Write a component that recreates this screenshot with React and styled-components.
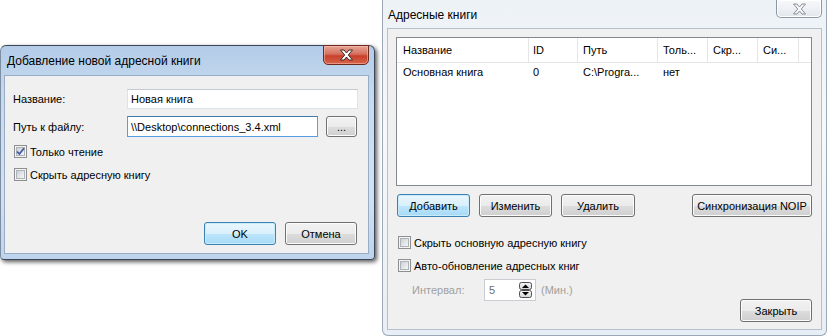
import styled, { createGlobalStyle } from "styled-components";

const GlobalStyle = createGlobalStyle`
  html, body { margin: 0; padding: 0; background: #fff; }
  body {
    font-family: "Liberation Sans", Arial, sans-serif;
    font-size: 11px;
    color: #000;
  }
  * { box-sizing: border-box; }
`;

const Stage = styled.div`
  width: 832px;
  height: 336px;
  overflow: hidden;
  background: #fff;
  display: flex;
  align-items: flex-start;
`;

/* ---------- window chrome ---------- */

const DialogFrame = styled.div`
  width: 375px;
  height: 215px;
  margin-top: 45px;
  display: flex;
  flex-direction: column;
  padding: 0 5px 5px 3px;
  border: 1px solid #3a4758;
  border-left-color: #7d8ea3;
  border-radius: 6px 6px 4px 4px;
  background: linear-gradient(180deg, #b3cce8 0%, #c6daef 22%, #d2e2f3 70%, #bed4ec 100%);
  box-shadow: 2px 2px 4px rgba(0, 0, 0, 0.65);
`;

const WindowFrame = styled.div`
  width: 445px;
  height: 336px;
  margin-left: 7px;
  display: flex;
  flex-direction: column;
  padding: 0 4px 5px 4px;
  border: 1px solid #9ca8b5;
  border-top: none;
  border-radius: 0 0 6px 6px;
  background: linear-gradient(180deg, #edf2f7 0%, #f6f8fb 40%, #e8eef5 100%);
`;

const TitleBar = styled.div`
  height: ${(p) => p.$h}px;
  display: flex;
  justify-content: space-between;
  align-items: flex-start;
`;

const TitleText = styled.div`
  padding: 8px 0 0 ${(p) => p.$indent}px;
  font-size: 12px;
  line-height: 14px;
  color: #000;
`;

const CloseButton = styled.div`
  width: 46px;
  height: ${(p) => (p.$active ? 20 : 18)}px;
  margin-top: ${(p) => (p.$active ? -1 : 0)}px;
  display: flex;
  align-items: center;
  justify-content: center;
  border: 1px solid ${(p) => (p.$active ? "#6e2a1f" : "#8b97a4")};
  border-top: ${(p) => (p.$active ? "1px solid #6e2a1f" : "none")};
  border-radius: 0 0 5px 5px;
  background: ${(p) =>
    p.$active
      ? "linear-gradient(180deg, #e7a596 0%, #d5705c 45%, #c7402a 55%, #d8644b 100%)"
      : "linear-gradient(180deg, #f7f9fb 0%, #eef1f5 50%, #e1e6ec 100%)"};
  box-shadow: inset 0 0 0 1px ${(p) => (p.$active ? "rgba(255,200,190,.5)" : "#fff")};
`;

const CloseGlyph = ({ active }) => (
  <svg width="15" height="12" viewBox="0 0 15 12">
    <path
      d="M1.5 1 H5 L7.5 4 L10 1 H13.5 L9.3 6 L13.5 11 H10 L7.5 8 L5 11 H1.5 L5.7 6 Z"
      fill={active ? "#ffffff" : "#f7f7f7"}
      stroke={active ? "#3b2b29" : "#8a8f96"}
      strokeWidth="1"
      strokeLinejoin="round"
    />
  </svg>
);

const ClientArea = styled.div`
  flex: 1;
  display: flex;
  flex-direction: column;
  background: #f0f0f0;
  border: 1px solid ${(p) => p.$edge};
  padding: ${(p) => p.$pad};
`;

/* ---------- controls ---------- */

const Button = styled.div`
  width: ${(p) => p.$w}px;
  height: ${(p) => p.$h || 23}px;
  margin-left: ${(p) => p.$ml || "0"};
  display: flex;
  align-items: center;
  justify-content: center;
  border: 1px solid ${(p) => (p.$primary ? "#3c7fb1" : "#707070")};
  border-radius: 3px;
  background: ${(p) =>
    p.$primary
      ? "linear-gradient(180deg, #eaf6fd 0%, #d9f0fc 50%, #bee6fd 51%, #a7d9f5 100%)"
      : "linear-gradient(180deg, #f2f2f2 0%, #ebebeb 50%, #dddddd 51%, #cfcfcf 100%)"};
  box-shadow: inset 0 0 0 1px ${(p) => (p.$primary ? "#c9ecfc" : "#fcfcfc")};
  font-size: 11px;
  color: #000;
`;

const TextInput = styled.div`
  width: ${(p) => p.$w}px;
  height: ${(p) => p.$h}px;
  display: flex;
  align-items: center;
  padding-left: 3px;
  background: #fff;
  border: 1px solid ${(p) => (p.$focus ? "#569de5" : "#dde3ea")};
  border-top-color: ${(p) => (p.$focus ? "#3d7bad" : "#c3c9d1")};
  white-space: nowrap;
  overflow: hidden;
`;

const CheckRow = styled.div`
  height: 13px;
  margin-top: ${(p) => p.$mt}px;
  margin-left: 1px;
  display: flex;
  align-items: center;
  gap: 3px;
  white-space: nowrap;
`;

const Box = styled.div`
  width: 13px;
  height: 13px;
  flex: none;
  padding: 2px;
  border: 1px solid #8e8f8f;
  display: flex;
  align-items: center;
  justify-content: center;
  box-shadow: inset 0 0 0 1px #f4f4f4, inset 0 0 0 2px #aeb3b9;
  background: #f4f4f4 linear-gradient(135deg, #cbcfd5 0%, #e6e8eb 60%, #f6f6f6 100%) content-box;
`;

const CheckBox = ({ checked }) => (
  <Box>
    {checked && (
      <svg width="9" height="9" viewBox="0 0 9 9" style={{ margin: -2 }}>
        <path d="M1 4.5 L3.4 7 L8 1.2" fill="none" stroke="#3d5aa0" strokeWidth="1.8" />
      </svg>
    )}
  </Box>
);

const Check = ({ checked, mt, children }) => (
  <CheckRow $mt={mt}>
    <CheckBox checked={checked} />
    <span>{children}</span>
  </CheckRow>
);

/* ---------- left dialog ---------- */

const FieldRow = styled.div`
  display: flex;
  align-items: center;
  margin-top: ${(p) => p.$mt}px;
`;

const FieldLabel = styled.div`
  width: 114px;
  flex: none;
`;

const ButtonRow = styled.div`
  display: flex;
  justify-content: ${(p) => p.$justify || "flex-start"};
  gap: 9px;
  margin-top: ${(p) => p.$mt || "0"};
  margin-right: ${(p) => p.$mr || 0}px;
  margin-left: ${(p) => p.$ml || 0}px;
`;

/* ---------- list view ---------- */

const List = styled.div`
  height: 149px;
  background: #fff;
  border: 1px solid #828790;
  display: flex;
  flex-direction: column;
`;

const ListHeader = styled.div`
  height: 25px;
  display: flex;
  border-bottom: 1px solid #e5e5e5;
`;

const ListRow = styled.div`
  height: 18px;
  display: flex;
  align-items: center;
`;

const Cell = styled.div`
  width: ${(p) => p.$w}px;
  flex: none;
  height: 100%;
  display: flex;
  align-items: center;
  padding-left: ${(p) => p.$pl}px;
  border-right: 1px solid ${(p) => (p.$head ? "#e5e5e5" : "transparent")};
  white-space: nowrap;
  overflow: hidden;
`;

const columns = [
  { title: "Название", w: 132, pl: 6 },
  { title: "ID", w: 49, pl: 4 },
  { title: "Путь", w: 80, pl: 5 },
  { title: "Толь...", w: 50, pl: 5 },
  { title: "Скр...", w: 50, pl: 5 },
  { title: "Си...", w: 41, pl: 5 },
];

const rows = [["Основная книга", "0", "C:\\Progra...", "нет", "", ""]];

/* ---------- options area ---------- */

const Options = styled.div`
  display: grid;
  grid-template-columns: 1fr auto;
  margin-top: 19px;
  margin-left: 1px;

  ${CheckRow} {
    grid-column: 1;
  }
`;

const IntervalRow = styled.div`
  grid-column: 1;
  grid-row: 3;
  align-self: start;
  margin-top: 7px;
  margin-left: 15px;
  display: flex;
  align-items: center;
  height: 22px;
  color: #a0a0a0;
`;

const IntervalLabel = styled.span`
  width: 72px;
`;

const SpinBox = styled.div`
  width: 52px;
  height: 22px;
  display: flex;
  align-items: center;
  justify-content: space-between;
  padding: 0 3px 0 4px;
  background: #fff;
  border: 1px solid #c9ccd1;
  color: #6d6d6d;
  margin-right: 5px;
`;

const CloseSlot = styled.div`
  grid-column: 2;
  grid-row: 3;
  margin-top: 27px;
  align-self: start;
`;

const SpinArrows = () => (
  <svg width="13" height="16" viewBox="0 0 13 16">
    <defs>
      <linearGradient id="sg" x1="0" y1="0" x2="0" y2="1">
        <stop offset="0" stopColor="#f6f6f6" />
        <stop offset="1" stopColor="#d6d6d6" />
      </linearGradient>
    </defs>
    <rect x="0.5" y="0.5" width="12" height="7" rx="2" fill="url(#sg)" stroke="#4f4f4f" />
    <rect x="0.5" y="8.5" width="12" height="7" rx="2" fill="url(#sg)" stroke="#4f4f4f" />
    <path d="M3 6 L6.5 2.4 L10 6 Z" fill="#000" />
    <path d="M3 10 L10 10 L6.5 13.6 Z" fill="#000" />
  </svg>
);

export default function App() {
  return (
    <>
      <GlobalStyle />
      <Stage>
        <DialogFrame>
          <TitleBar $h={29}>
            <TitleText $indent={3}>Добавление новой адресной книги</TitleText>
            <CloseButton $active>
              <CloseGlyph active />
            </CloseButton>
          </TitleBar>
          <ClientArea $edge="#98acc5" $pad="13px 10px 8px 8px">
            <FieldRow $mt={0}>
              <FieldLabel>Название:</FieldLabel>
              <TextInput $w={231} $h={20}>Новая книга</TextInput>
            </FieldRow>
            <FieldRow $mt={7}>
              <FieldLabel>Путь к файлу:</FieldLabel>
              <TextInput $w={191} $h={21} $focus>
                \\Desktop\connections_3.4.xml
              </TextInput>
              <Button $w={31} $h={21} $ml="8px">
                ...
              </Button>
            </FieldRow>
            <Check checked mt={8}>
              Только чтение
            </Check>
            <Check mt={10}>Скрыть адресную книгу</Check>
            <ButtonRow $justify="flex-end" $mt="auto" $mr={1}>
              <Button $w={72} $primary>
                OK
              </Button>
              <Button $w={72}>Отмена</Button>
            </ButtonRow>
          </ClientArea>
        </DialogFrame>

        <WindowFrame>
          <TitleBar $h={28}>
            <TitleText $indent={1}>Адресные книги</TitleText>
            <CloseButton>
              <CloseGlyph />
            </CloseButton>
          </TitleBar>
          <ClientArea $edge="#b6c0cb" $pad="8px 9px 0 8px">
            <List>
              <ListHeader>
                {columns.map((c) => (
                  <Cell key={c.title} $w={c.w} $pl={c.pl} $head>
                    {c.title}
                  </Cell>
                ))}
              </ListHeader>
              {rows.map((r, i) => (
                <ListRow key={i}>
                  {r.map((v, j) => (
                    <Cell key={j} $w={columns[j].w} $pl={columns[j].pl}>
                      {v}
                    </Cell>
                  ))}
                </ListRow>
              ))}
            </List>

            <ButtonRow $mt="8px" $ml={1}>
              <Button $w={73} $primary>
                Добавить
              </Button>
              <Button $w={73}>Изменить</Button>
              <Button $w={74}>Удалить</Button>
              <Button $w={120} $ml="auto">
                Синхронизация NOIP
              </Button>
            </ButtonRow>

            <Options>
              <Check mt={0}>Скрыть основную адресную книгу</Check>
              <Check mt={10}>Авто-обновление адресных книг</Check>
              <IntervalRow>
                <IntervalLabel>Интервал:</IntervalLabel>
                <SpinBox>
                  <span>5</span>
                  <SpinArrows />
                </SpinBox>
                <span>(Мин.)</span>
              </IntervalRow>
              <CloseSlot>
                <Button $w={72}>Закрыть</Button>
              </CloseSlot>
            </Options>
          </ClientArea>
        </WindowFrame>
      </Stage>
    </>
  );
}
